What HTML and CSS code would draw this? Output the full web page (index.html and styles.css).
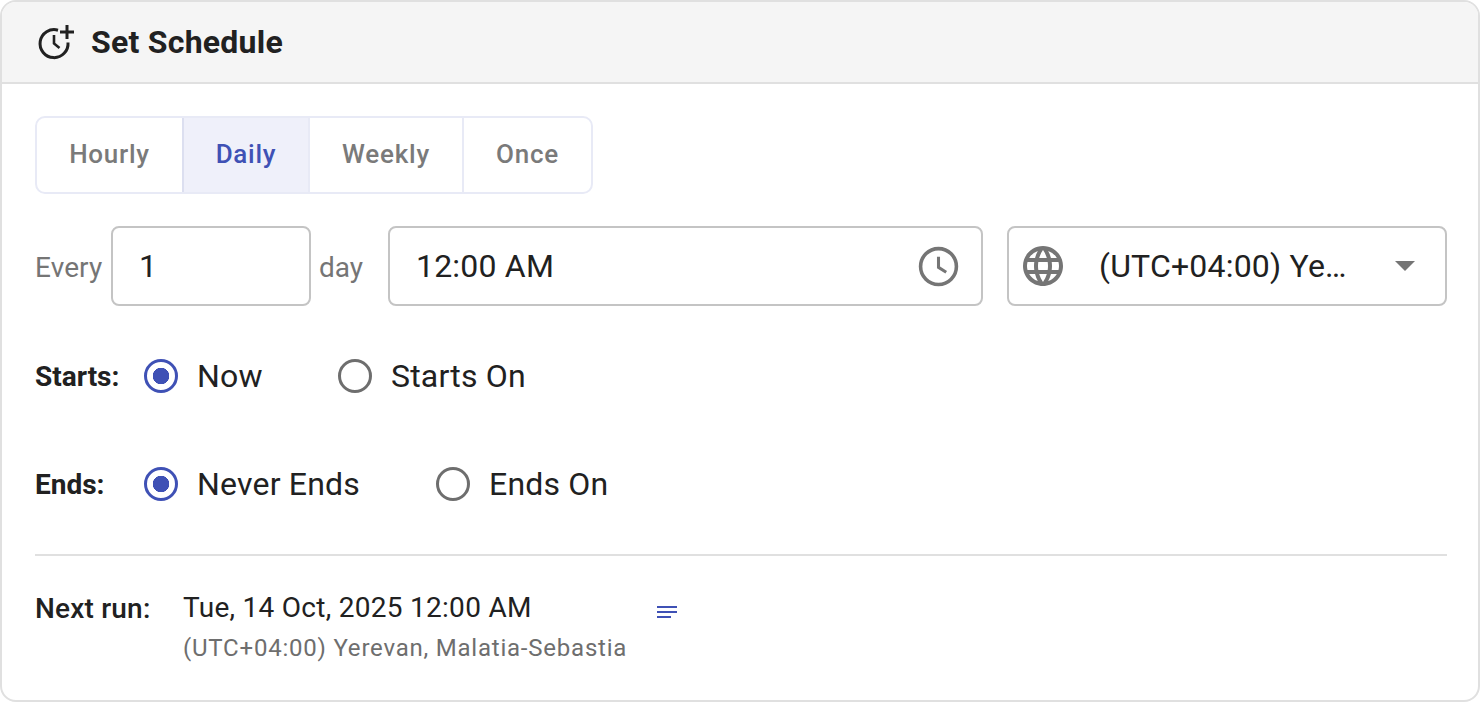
FILE: index.html
```html
<!DOCTYPE html>
<html lang="en">
<head>
<meta charset="utf-8">
<title>Set Schedule</title>
<link rel="stylesheet" href="styles.css">
</head>
<body>
<section class="card">
  <header class="head">
    <svg class="head-icon" viewBox="0 0 40 40" fill="none" stroke="#212121" stroke-width="3">
      <path d="M22 8.2A14 14 0 1 0 32 20.500"/>
      <path d="M18 13v8.500l5.500 4.500" stroke-width="2.600"/>
      <path d="M31 3v14M24 10h14"/>
    </svg>
    <h1 class="title">Set Schedule</h1>
  </header>
  <div class="body">
    <div class="tabs">
      <div class="tab tab-hourly">Hourly</div>
      <div class="tab tab-active tab-daily">Daily</div>
      <div class="tab tab-weekly">Weekly</div>
      <div class="tab tab-once">Once</div>
    </div>
    <div class="freq">
      <span class="muted every">Every</span>
      <div class="field f-num">1</div>
      <span class="muted day">day</span>
      <div class="field f-time">
        <span>12:00 AM</span>
        <svg class="clock" viewBox="0 0 24 24" fill="none" stroke="#757575" stroke-width="2"><circle cx="12" cy="12" r="10"/><path d="M12 6.500V12.500l4.300 2.700" stroke-width="1.700"/></svg>
      </div>
      <div class="field f-zone">
        <svg class="globe" viewBox="0 0 24 24" fill="#757575"><path d="M11.990 2C6.470 2 2 6.480 2 12s4.470 10 9.990 10C17.520 22 22 17.520 22 12S17.520 2 11.990 2zm6.930 6h-2.950a15.650 15.650 0 0 0-1.380-3.560A8.030 8.030 0 0 1 18.920 8zM12 4.040c.83 1.200 1.480 2.530 1.910 3.960h-3.820c.43-1.430 1.080-2.760 1.910-3.960zM4.260 14C4.100 13.360 4 12.690 4 12s.1-1.360.26-2h3.380c-.08.660-.14 1.320-.14 2s.06 1.340.14 2H4.260zm.82 2h2.950c.32 1.250.78 2.450 1.380 3.560A7.987 7.987 0 0 1 5.080 16zm2.950-8H5.080a7.987 7.987 0 0 1 4.330-3.560A15.650 15.650 0 0 0 8.030 8zM12 19.960c-.83-1.200-1.480-2.530-1.910-3.960h3.820c-.43 1.430-1.080 2.760-1.910 3.960zM14.340 14H9.660c-.09-.660-.16-1.320-.16-2s.07-1.350.16-2h4.680c.09.650.16 1.320.16 2s-.07 1.340-.16 2zm.25 5.560c.6-1.110 1.060-2.310 1.380-3.560h2.950a8.030 8.030 0 0 1-4.330 3.560zM16.360 14c.08-.660.14-1.320.14-2s-.06-1.340-.14-2h3.380c.16.640.26 1.310.26 2s-.1 1.360-.26 2h-3.380z"/></svg>
        <span class="zone-text">(UTC+04:00) Ye…</span>
        <span class="caret"></span>
      </div>
    </div>
    <div class="row row-starts">
      <span class="label l-starts">Starts:</span>
      <span class="radio on"></span><span class="opt o-now">Now</span>
      <span class="radio"></span><span class="opt">Starts On</span>
    </div>
    <div class="row row-ends">
      <span class="label l-ends">Ends:</span>
      <span class="radio on"></span><span class="opt o-never">Never Ends</span>
      <span class="radio"></span><span class="opt">Ends On</span>
    </div>
    <hr class="rule">
    <div class="next">
      <span class="label l-next">Next run:</span>
      <div class="next-text">
        <div class="when">Tue, 14 Oct, 2025 12:00 AM</div>
        <div class="tz">(UTC+04:00) Yerevan, Malatia-Sebastia</div>
      </div>
      <svg class="list-icon" viewBox="0 0 22 14" fill="#3f51b5"><rect x="0" y="0" width="20" height="2"/><rect x="0" y="5" width="20" height="2"/><rect x="0" y="10" width="14" height="2"/></svg>
    </div>
  </div>
</section>
</body>
</html>
```
FILE: styles.css
```css
* { box-sizing: border-box; }
html, body { margin: 0; height: 100%; background: #fff; }
body { font-family: Roboto, "Liberation Sans", sans-serif; color: #212121; overflow: hidden; }
.card { width: 1480px; height: 702px; border: 2px solid #e0e0e0; border-radius: 16px; overflow: hidden; background: #fff; }
.head { height: 82px; display: flex; align-items: center; padding-left: 34px; background: #f5f5f5; border-bottom: 2px solid #e0e0e0; }
.head-icon { width: 40px; height: 40px; margin-right: 15px; }
.title { margin: 0; font-size: 32px; font-weight: 700; letter-spacing: 0.25px; line-height: 40px; color: #212121; }
.body { padding: 32px 31px 0 33px; }
.tabs { display: inline-flex; height: 78px; border: 2px solid #e8eaf6; border-radius: 10px; overflow: hidden; vertical-align: top; }
.tab { display: flex; align-items: center; justify-content: center; padding-bottom: 3px; font-size: 26px; font-weight: 500; letter-spacing: 0.75px; color: #7a7a7a; border-left: 2px solid #e8eaf6; }
.tab-hourly { width: 145px; border-left: 0; }
.tab-daily { width: 126px; background: #eff0fa; color: #3f51b5; border-left-color: #dcdff0; }
.tab-weekly { width: 154px; }
.tab-once { width: 129px; }
.freq { display: flex; align-items: center; margin-top: 32px; height: 80px; }
.muted { font-size: 28px; padding-top: 2px; color: #757575; }
.every { width: 76px; letter-spacing: 0.1px; }
.day { width: 77px; padding-left: 8px; }
.field { height: 80px; flex: none; border: 2px solid #c4c4c4; border-radius: 8px; display: flex; align-items: center; font-size: 32px; letter-spacing: 0.2px; color: #212121; }
.f-num { width: 200px; padding-left: 26px; }
.f-time { width: 595px; padding: 0 21px 0 26px; justify-content: space-between; }
.f-zone { width: 440px; margin-left: 24px; padding-left: 10px; }
.clock { width: 43px; height: 43px; flex: none; }
.globe { width: 48px; height: 48px; flex: none; }
.zone-text { margin-left: 32px; width: 296px; }
.caret { width: 0; height: 0; border: 10px solid transparent; border-top-color: #757575; border-bottom: 0; }
.row { display: flex; align-items: center; height: 40px; }
.row-starts { margin-top: 50px; }
.row-ends { margin-top: 68px; }
.label { font-size: 28px; font-weight: 700; color: #212121; }
.l-starts, .l-ends { width: 109px; }
.radio { width: 34px; height: 34px; flex: none; border-radius: 50%; border: 3px solid #6e6e6e; }
.radio.on { border-color: #3f51b5; background: radial-gradient(circle, #3f51b5 0 8px, transparent 8.500px); }
.opt { margin-left: 19px; font-size: 32px; letter-spacing: 0.2px; color: #212121; }
.o-now { width: 141px; }
.o-never { width: 239px; }
.rule { margin: 50px 0 0; height: 2px; border: 0; background: #e0e0e0; }
.next { display: flex; align-items: flex-start; margin-top: 34px; }
.l-next { width: 148px; line-height: 38px; letter-spacing: 0.200px; font-weight: 500; }
.next-text { width: 474px; }
.when { font-size: 28px; line-height: 36px; letter-spacing: 0.28px; color: #212121; }
.tz { font-size: 24px; line-height: 36px; letter-spacing: 0.78px; color: #6e6e6e; margin-top: 4px; }
.list-icon { width: 22px; height: 14px; margin-top: 16px; }
```
